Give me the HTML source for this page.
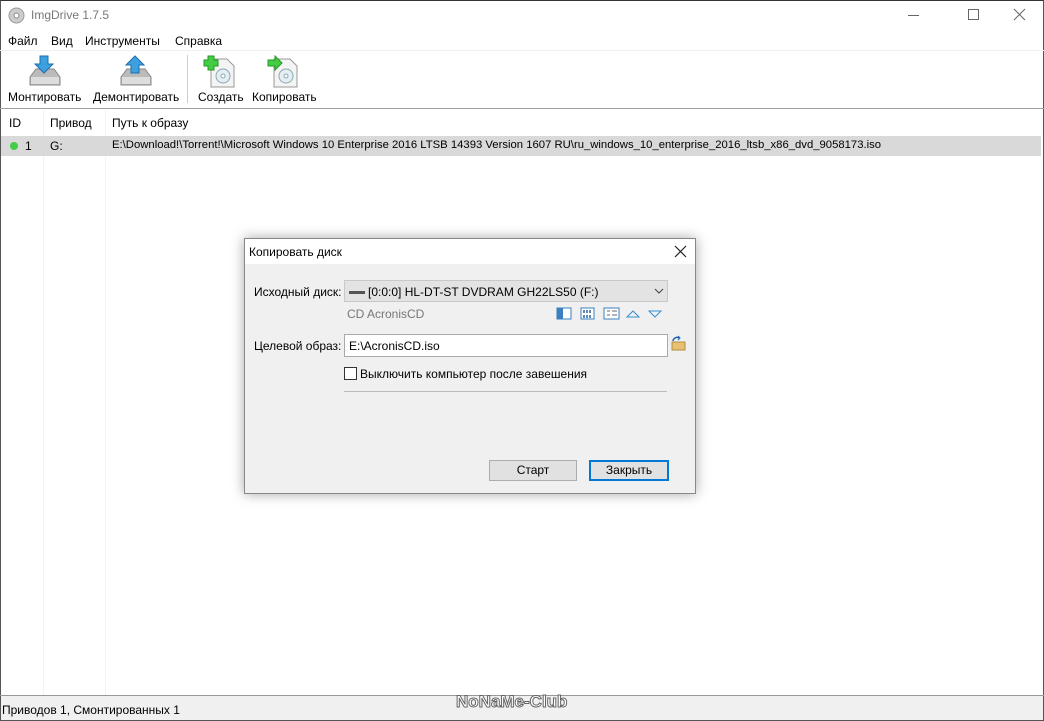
<!DOCTYPE html>
<html><head><meta charset="utf-8"><style>
*{margin:0;padding:0;box-sizing:border-box}
body{width:1044px;height:721px;position:relative;background:#fff;font-family:"Liberation Sans","DejaVu Sans",sans-serif;font-size:12px;color:#000;overflow:hidden}
.a{position:absolute;white-space:nowrap}
</style></head><body>
<div class="a" style="left:0;top:0;width:1044px;height:721px;border:1px solid #555;border-top-color:#333"></div>
<!-- title -->
<svg class="a" style="left:8px;top:7px" width="17" height="17" viewBox="0 0 17 17"><circle cx="8.5" cy="8.5" r="7.5" fill="#ccc" stroke="#999"/><circle cx="8.5" cy="8.5" r="2.5" fill="#fff" stroke="#888"/></svg>
<div class="a" style="left:31px;top:8px;font-size:12px;color:#777">ImgDrive 1.7.5</div>
<div class="a" style="left:908px;top:15px;width:11px;height:1px;background:#666"></div>
<div class="a" style="left:968px;top:9px;width:11px;height:11px;border:1px solid #666"></div>
<svg class="a" style="left:1013px;top:8px" width="13" height="13"><path d="M1 1L12 12M12 1L1 12" stroke="#666"/></svg>
<!-- menu -->
<div class="a" style="left:8px;top:34px">Файл</div>
<div class="a" style="left:51px;top:34px">Вид</div>
<div class="a" style="left:85px;top:34px">Инструменты</div>
<div class="a" style="left:175px;top:34px">Справка</div>
<div class="a" style="left:0;top:50px;width:1044px;height:1px;background:#f0f0f0"></div>
<!-- toolbar -->
<svg class="a" style="left:26px;top:55px" width="36" height="34"><path d="M4 22L10 14H28L34 22V30H4Z" fill="#bbb" stroke="#888"/><rect x="5" y="22" width="28" height="7" fill="#ddd"/><path d="M14 1H22V9H27L18 18L9 9H14Z" fill="#3fa0e0" stroke="#1a70b0"/></svg>
<svg class="a" style="left:117px;top:55px" width="36" height="34"><path d="M4 22L10 14H28L34 22V30H4Z" fill="#bbb" stroke="#888"/><rect x="5" y="22" width="28" height="7" fill="#ddd"/><path d="M14 18H22V10H27L18 1L9 10H14Z" fill="#3fa0e0" stroke="#1a70b0"/></svg>
<div class="a" style="left:8px;top:90px">Монтировать</div>
<div class="a" style="left:93px;top:90px">Демонтировать</div>
<div class="a" style="left:187px;top:55px;width:1px;height:48px;background:#ccc"></div>
<svg class="a" style="left:203px;top:55px" width="34" height="34"><path d="M8 4H24L31 11V32H8Z" fill="#f4f4f4" stroke="#999"/><circle cx="20" cy="21" r="7" fill="#e6eef5" stroke="#8aa"/><circle cx="20" cy="21" r="2" fill="#fff" stroke="#8aa"/><path d="M5 1H11V5H15V11H11V15H5V11H1V5H5Z" fill="#4c4" stroke="#292"/></svg>
<svg class="a" style="left:266px;top:55px" width="34" height="34"><path d="M8 4H24L31 11V32H8Z" fill="#f4f4f4" stroke="#999"/><circle cx="20" cy="21" r="7" fill="#e6eef5" stroke="#8aa"/><circle cx="20" cy="21" r="2" fill="#fff" stroke="#8aa"/><path d="M2 5H9V1L16 8L9 15V11H2Z" fill="#4c4" stroke="#292"/></svg>
<div class="a" style="left:198px;top:90px">Создать</div>
<div class="a" style="left:252px;top:90px">Копировать</div>
<div class="a" style="left:0;top:108px;width:1044px;height:1px;background:#a0a0a0"></div>
<!-- list -->
<div class="a" style="left:43px;top:110px;width:1px;height:586px;background:#eef4f8"></div>
<div class="a" style="left:105px;top:110px;width:1px;height:586px;background:#eef4f8"></div>
<div class="a" style="left:9px;top:116px">ID</div>
<div class="a" style="left:50px;top:116px">Привод</div>
<div class="a" style="left:112px;top:116px">Путь к образу</div>
<div class="a" style="left:1px;top:136px;width:1040px;height:20px;background:#d9d9d9"></div>
<div class="a" style="left:10px;top:142px;width:8px;height:8px;border-radius:50%;background:#4c4"></div>
<div class="a" style="left:25px;top:139px">1</div>
<div class="a" style="left:50px;top:139px">G:</div>
<div class="a" style="left:112px;top:139px;font-size:11.3px">E:\Download!\Torrent!\Microsoft Windows 10 Enterprise 2016 LTSB 14393 Version 1607 RU\ru_windows_10_enterprise_2016_ltsb_x86_dvd_9058173.iso</div>
<!-- status -->
<div class="a" style="left:0;top:695px;width:1044px;height:1px;background:#999"></div>
<div class="a" style="left:1px;top:696px;width:1042px;height:24px;background:#f0f0f0"></div>
<div class="a" style="left:2px;top:703px">Приводов 1, Смонтированных 1</div>
<div class="a" style="left:456px;top:692px;font-size:17px;color:#fff;-webkit-text-stroke:1px #666;font-weight:bold">NoNaMe-Club</div>
<!-- dialog -->
<div class="a" style="left:244px;top:238px;width:452px;height:256px;background:#f0f0f0;border:1px solid #888;box-shadow:0 0 12px rgba(0,0,0,.35)">
 <div class="a" style="left:0;top:0;width:450px;height:25px;background:#fff"></div>
 <div class="a" style="left:4px;top:6px">Копировать диск</div>
 <svg class="a" style="left:429px;top:6px" width="13" height="13"><path d="M1 1L12 12M12 1L1 12" stroke="#222" stroke-width="1.2"/></svg>
 <div class="a" style="left:9px;top:46px">Исходный диск:</div>
 <div class="a" style="left:99px;top:41px;width:324px;height:22px;background:#e3e3e3;border:1px solid #c8c8c8"></div>
 <div class="a" style="left:104px;top:52px;width:16px;height:3px;background:#555"></div>
 <div class="a" style="left:123px;top:46px">[0:0:0] HL-DT-ST DVDRAM GH22LS50 (F:)</div>
 <svg class="a" style="left:409px;top:49px" width="10" height="6"><path d="M1 1L5 5L9 1" stroke="#444" fill="none"/></svg>
 <div class="a" style="left:102px;top:68px;color:#777">CD AcronisCD</div>
 <svg class="a" style="left:311px;top:68px" width="110" height="14"><rect x="1" y="1" width="14" height="11" fill="#fff" stroke="#3a80c0"/><rect x="1" y="1" width="6" height="11" fill="#3a80c0"/><rect x="25" y="1" width="13" height="11" fill="#fff" stroke="#3a80c0"/><path d="M28 3v3M31 3v3M34 3v3M28 8v3M31 8v3M34 8v3" stroke="#2a60a0" stroke-width="1.5"/><rect x="48" y="1" width="15" height="11" fill="#fff" stroke="#3a80c0"/><path d="M51 4h3M51 8h3M56 4h5M56 8h5" stroke="#666"/><path d="M71 10L77 4L83 10Z" fill="none" stroke="#3a90d0"/><path d="M93 4L99 10L105 4Z" fill="none" stroke="#3a90d0"/></svg>
 <div class="a" style="left:9px;top:100px">Целевой образ:</div>
 <div class="a" style="left:99px;top:95px;width:324px;height:23px;background:#fff;border:1px solid #aaa"></div>
 <div class="a" style="left:104px;top:100px">E:\AcronisCD.iso</div>
 <svg class="a" style="left:425px;top:96px" width="16" height="16"><rect x="2" y="7" width="13" height="8" fill="#e8c070" stroke="#b09040"/><path d="M3 6A4 4 0 0 1 9 3" stroke="#2060b0" fill="none" stroke-width="1.5"/><path d="M8 1L10 3L8 5" stroke="#2060b0" fill="none"/></svg>
 <div class="a" style="left:99px;top:128px;width:13px;height:13px;background:#fff;border:1px solid #333"></div>
 <div class="a" style="left:115px;top:128px">Выключить компьютер после завешения</div>
 <div class="a" style="left:99px;top:152px;width:323px;height:1px;background:#bbb"></div>
 <div class="a" style="left:244px;top:221px;width:88px;height:21px;background:#e1e1e1;border:1px solid #adadad;text-align:center;line-height:19px">Старт</div>
 <div class="a" style="left:344px;top:221px;width:80px;height:21px;background:#e1e1e1;border:2px solid #0078d7;text-align:center;line-height:17px">Закрыть</div>
</div>
</body></html>
